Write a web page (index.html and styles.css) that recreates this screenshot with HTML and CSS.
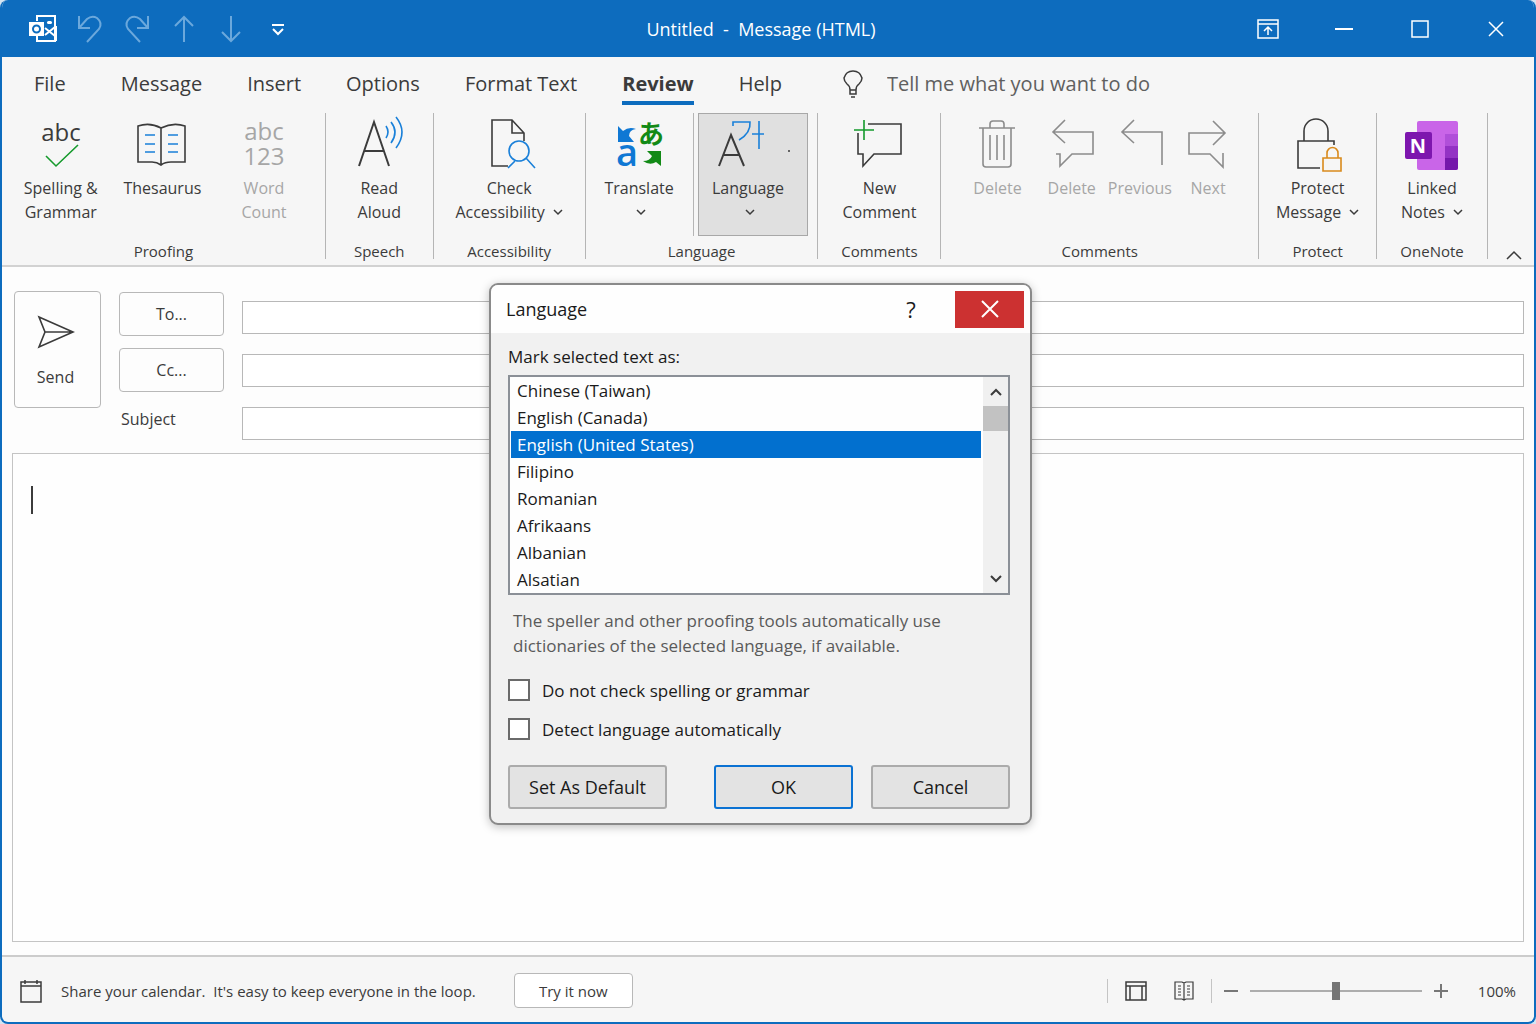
FILE: index.html
```html
<!doctype html>
<html lang="en">
<head>
    <meta charset="UTF-8">
    <meta name="viewport" content="width=device-width, initial-scale=1.0">
    <title>Untitled - Message (HTML)</title>
    <link rel="stylesheet" href="styles.css">
</head>
<body>
<div class="window">

    <!-- Title bar -->
    <header class="titlebar">
        <div class="quick-access">
            <button class="quick-btn" aria-label="Outlook">
                <svg width="28" height="28" viewBox="0 0 28 28">
                    <path d="M8 6V1H26V26H8V21" fill="none" stroke="#fff" stroke-width="2"/>
                    <path d="M16 13L26 21M26 12L16 20M27 11V26" fill="none" stroke="#fff" stroke-width="2"/>
                    <rect x="18" y="6" width="5" height="3" rx="1.5" fill="#fff" stroke="none"/>
                    <rect x="0" y="7" width="15" height="14" fill="#fff" stroke="none"/>
                    <circle cx="7.5" cy="14" r="3.5" fill="none" stroke="#0d6cbe" stroke-width="2"/>
                </svg>
            </button>
            <button class="quick-btn faded" aria-label="Undo">
                <svg width="26" height="28" viewBox="0 0 26 28">
                    <path d="M2 1V13H13M2 13L10 4Q15 0 20 3Q26 8 22 14L10 27"/>
                </svg>
            </button>
            <button class="quick-btn faded" aria-label="Redo">
                <svg width="26" height="28" viewBox="0 0 26 28">
                    <path d="M24 1V13H13M24 13L16 4Q11 0 6 3Q0 8 4 14L16 27"/>
                </svg>
            </button>
            <button class="quick-btn faded" aria-label="Previous item">
                <svg width="20" height="28" viewBox="0 0 20 28">
                    <path d="M10 27V2M1 11L10 2L19 11"/>
                </svg>
            </button>
            <button class="quick-btn faded" aria-label="Next item">
                <svg width="20" height="28" viewBox="0 0 20 28">
                    <path d="M10 1V26M1 17L10 26L19 17"/>
                </svg>
            </button>
            <button class="quick-btn" aria-label="Customize toolbar">
                <svg width="14" height="12" viewBox="0 0 14 12">
                    <path d="M1 2H13M2 6L7 11L12 6" stroke-width="2"/>
                </svg>
            </button>
        </div>
        <h1 class="title">Untitled &nbsp;-&nbsp; Message (HTML)</h1>
        <div class="window-controls">
            <button class="control-btn" aria-label="Ribbon display options">
                <svg width="22" height="20" viewBox="0 0 22 20">
                    <path d="M1 1H21V19H1ZM1 5H21M11 16V8M7 12L11 8L15 12" stroke-width="1.5"/>
                </svg>
            </button>
            <button class="control-btn" aria-label="Minimize">
                <svg width="18" height="18" viewBox="0 0 18 18"><path d="M0 9H18" stroke-width="2"/></svg>
            </button>
            <button class="control-btn" aria-label="Maximize">
                <svg width="18" height="18" viewBox="0 0 18 18"><path d="M1 1H17V17H1Z" stroke-width="1.5"/></svg>
            </button>
            <button class="control-btn" aria-label="Close">
                <svg width="16" height="16" viewBox="0 0 16 16"><path d="M1 1L15 15M15 1L1 15" stroke-width="1.5"/></svg>
            </button>
        </div>
    </header>

    <!-- Tabs -->
    <nav class="tabs">
        <a href="#" class="tab file">File</a>
        <a href="#" class="tab">Message</a>
        <a href="#" class="tab">Insert</a>
        <a href="#" class="tab">Options</a>
        <a href="#" class="tab">Format Text</a>
        <a href="#" class="tab active">Review</a>
        <a href="#" class="tab">Help</a>
        <label class="tell-me">
            <svg width="20" height="28" viewBox="0 0 20 28">
                <path stroke-width="1.5" d="M7 20Q7 16 4 14Q1 11 1 8Q3 1 10 1Q17 1 19 8Q19 11 16 14Q13 16 13 20ZM7 20V24H13V20M8 27H12"/>
            </svg>
            <input type="text" class="tell-input" placeholder="Tell me what you want to do">
        </label>
    </nav>

    <!-- Ribbon -->
    <div class="ribbon">
        <section class="group">
            <div class="tools proofing">
                <button class="tool">
                    <svg class="icon" viewBox="0 0 50 50">
                        <text class="icon-text" x="25" y="23">abc</text>
                        <path class="green" d="M10 38L20 48L42 27"/>
                    </svg>
                    <span>Spelling &amp;<br>Grammar</span>
                </button>
                <button class="tool">
                    <svg class="icon" viewBox="0 0 50 50">
                        <path d="M1 8Q13 4 24 10Q36 4 48 8V44H34Q28 44 24 47Q20 44 15 44H1ZM24 10V47"/>
                        <path class="blue" d="M8 17H18M8 26H18M8 34H18M31 17H41M31 26H41M31 34H41"/>
                    </svg>
                    <span>Thesaurus</span>
                </button>
                <button class="tool" disabled>
                    <span class="word-icon">abc<br>123</span>
                    <span>Word<br>Count</span>
                </button>
            </div>
            <h2 class="group-name">Proofing</h2>
        </section>

        <section class="group">
            <div class="tools">
                <button class="tool">
                    <svg class="icon" viewBox="0 0 50 50">
                        <path stroke-width="2" d="M5 48L20 4L35 48M10 33H30"/>
                        <path class="blue" d="M32 8Q36 14 32 20M37 4Q45 14 37 25M42 -1Q54 14 42 30"/>
                    </svg>
                    <span>Read<br>Aloud</span>
                </button>
            </div>
            <h2 class="group-name">Speech</h2>
        </section>

        <section class="group">
            <div class="tools">
                <button class="tool">
                    <svg class="icon" viewBox="0 0 50 50">
                        <path d="M24 48H8V2H28L40 15V23M28 2V15H40"/>
                        <circle class="blue" cx="35" cy="33" r="10"/>
                        <path class="blue" d="M42 40L51 50M31 43L24 50"/>
                    </svg>
                    <span>Check<br>Accessibility <svg class="chevron" viewBox="0 0 10 7"><path d="M1 1L5 5L9 1"/></svg></span>
                </button>
            </div>
            <h2 class="group-name">Accessibility</h2>
        </section>

        <section class="group">
            <div class="tools language">
                <button class="tool">
                    <svg class="icon" viewBox="0 0 50 50">
                        <path class="fill-blue" d="M4 8L9 13Q15 8 22 11Q15 12 15 18L20 24H4Z"/>
                        <path class="fill-green" d="M33 33H47V48L42 44Q36 48 29 43Q36 43 38 38Z"/>
                        <text class="latin-a" x="2" y="48">a</text>
                        <text class="kana" x="24" y="26">あ</text>
                    </svg>
                    <span>Translate<br><svg class="chevron" viewBox="0 0 10 7"><path d="M1 1L5 5L9 1"/></svg></span>
                </button>
                <button class="tool pressed">
                    <svg class="icon" viewBox="0 0 50 50">
                        <path stroke-width="2" d="M-4 48L8 17L21 48M0 37H16"/>
                        <path class="blue" d="M10 8V4H27Q28 15 16 22M36 3V31M29 16H41"/>
                        <circle class="dot" cx="66" cy="33" r="1"/>
                    </svg>
                    <span>Language<br><svg class="chevron" viewBox="0 0 10 7"><path d="M1 1L5 5L9 1"/></svg></span>
                </button>
            </div>
            <h2 class="group-name">Language</h2>
        </section>

        <section class="group">
            <div class="tools">
                <button class="tool">
                    <svg class="icon" viewBox="0 0 50 50">
                        <path d="M14 6H47V36H20L9 48V36H4V15"/>
                        <path class="green" d="M10 2V22M0 12H20"/>
                    </svg>
                    <span>New<br>Comment</span>
                </button>
            </div>
            <h2 class="group-name">Comments</h2>
        </section>

        <section class="group">
            <div class="tools comments">
                <button class="tool" disabled>
                    <svg class="icon" viewBox="0 0 50 50">
                        <path d="M7 10H43M18 10V6Q18 3 21 3H29Q32 3 32 6V10M11 10V46Q11 49 14 49H36Q39 49 39 46V10M18 17V42M25 17V42M32 17V42"/>
                    </svg>
                    <span>Delete</span>
                </button>
                <button class="tool" disabled>
                    <svg class="icon" viewBox="0 0 50 50">
                        <path d="M18 2L6 14L18 25M6 14H46V36H25L13 48V36H9"/>
                    </svg>
                    <span>Delete</span>
                </button>
                <button class="tool" disabled>
                    <svg class="icon" viewBox="0 0 50 50">
                        <path d="M19 2L7 14L19 25M7 14H47V47"/>
                    </svg>
                    <span>Previous</span>
                </button>
                <button class="tool" disabled>
                    <svg class="icon" viewBox="0 0 50 50">
                        <path d="M30 3L42 15L30 27M42 15H6V36H27L40 49V35"/>
                    </svg>
                    <span>Next</span>
                </button>
            </div>
            <h2 class="group-name">Comments</h2>
        </section>

        <section class="group">
            <div class="tools">
                <button class="tool">
                    <svg class="icon" viewBox="0 0 50 50">
                        <path d="M41 27V23H5V50H27M11 23V13A12 12 0 0 1 35 13V23"/>
                        <path class="orange" d="M30 40H48V53H30ZM34 40V35A5 5 0 0 1 45 35V40"/>
                    </svg>
                    <span>Protect<br>Message <svg class="chevron" viewBox="0 0 10 7"><path d="M1 1L5 5L9 1"/></svg></span>
                </button>
            </div>
            <h2 class="group-name">Protect</h2>
        </section>

        <section class="group">
            <div class="tools">
                <button class="tool">
                    <svg class="icon onenote" viewBox="0 0 50 50">
                        <rect x="10" y="3" width="41" height="49" rx="2" fill="#c965e8"/>
                        <rect x="38" y="16" width="13" height="12" fill="#b04fd9"/>
                        <rect x="38" y="28" width="13" height="12" fill="#9332c4"/>
                        <path d="M38 40H51V50Q51 52 49 52H38Z" fill="#7517ab"/>
                        <rect x="-2" y="14" width="27" height="27" rx="2" fill="#7d16ae"/>
                        <text class="onenote-n" x="11" y="35">N</text>
                    </svg>
                    <span>Linked<br>Notes <svg class="chevron" viewBox="0 0 10 7"><path d="M1 1L5 5L9 1"/></svg></span>
                </button>
            </div>
            <h2 class="group-name">OneNote</h2>
        </section>

        <button class="collapse" aria-label="Collapse the ribbon">
            <svg width="16" height="10" viewBox="0 0 16 10"><path d="M1 9L8 2L15 9"/></svg>
        </button>
    </div>

    <!-- Message -->
    <main class="message">
        <div class="fields">
            <button class="send">
                <svg width="36" height="32" viewBox="0 0 36 32">
                    <path d="M1 1L35 16L1 31L7 16ZM7 16H35"/>
                </svg>
                <span>Send</span>
            </button>
            <div class="recipients">
                <button class="field-btn">To...</button>
                <button class="field-btn">Cc...</button>
                <label class="subject-label" for="subject">Subject</label>
            </div>
            <div class="inputs">
                <input type="text" class="field" aria-label="To">
                <input type="text" class="field" aria-label="Cc">
                <input type="text" class="field" id="subject">
            </div>
        </div>
        <div class="editor">
            <textarea class="editor-text" aria-label="Message body"></textarea>
            <span class="caret"></span>
        </div>
    </main>

    <!-- Status bar -->
    <footer class="statusbar">
        <svg class="calendar" width="22" height="24" viewBox="0 0 22 24">
            <path d="M1 3H21V23H1ZM1 7H21M5 1V5M17 1V5"/>
        </svg>
        <span class="share">Share your calendar.&nbsp; It's easy to keep everyone in the loop.</span>
        <button class="try">Try it now</button>
        <div class="views">
            <button class="view-btn" aria-label="Normal view">
                <svg width="22" height="20" viewBox="0 0 22 20">
                    <path d="M1 1H21V19H1ZM1 5H21M5 5V19M17 5V19"/>
                </svg>
            </button>
            <button class="view-btn" aria-label="Reading view">
                <svg width="20" height="20" viewBox="0 0 20 20">
                    <path d="M1 1H8L10 2L12 1H19V18H12L10 19L8 18H1ZM10 2V19M4 5H7M4 8H7M4 11H7M4 14H7M13 5H16M13 8H16M13 11H16M13 14H16"/>
                </svg>
            </button>
        </div>
        <div class="zoom">
            <button class="zoom-btn" aria-label="Zoom out">
                <svg width="14" height="14" viewBox="0 0 14 14"><path d="M0 7H14" stroke-width="2"/></svg>
            </button>
            <input type="range" class="slider" min="0" max="200" value="100" aria-label="Zoom">
            <button class="zoom-btn" aria-label="Zoom in">
                <svg width="14" height="14" viewBox="0 0 14 14"><path d="M0 7H14M7 0V14" stroke-width="2"/></svg>
            </button>
            <span class="zoom-value">100%</span>
        </div>
    </footer>

    <!-- Language dialog -->
    <div class="dialog" role="dialog" aria-labelledby="dialogTitle">
        <div class="dialog-head">
            <h2 class="dialog-title" id="dialogTitle">Language</h2>
            <button class="help">?</button>
            <button class="close" aria-label="Close dialog">
                <svg width="18" height="18" viewBox="0 0 18 18"><path d="M1 1L17 17M17 1L1 17" stroke-width="2"/></svg>
            </button>
        </div>
        <form class="dialog-body">
            <label class="list-label" for="languages">Mark selected text as:</label>
            <div class="list">
                <select class="languages" id="languages" size="8">
                    <option>Chinese (Taiwan)</option>
                    <option>English (Canada)</option>
                    <option selected>English (United States)</option>
                    <option>Filipino</option>
                    <option>Romanian</option>
                    <option>Afrikaans</option>
                    <option>Albanian</option>
                    <option>Alsatian</option>
                </select>
                <div class="scrollbar">
                    <button type="button" class="scroll-btn" aria-label="Scroll up">
                        <svg width="12" height="8" viewBox="0 0 12 8"><path d="M1 7L6 2L11 7" stroke-width="2"/></svg>
                    </button>
                    <div class="scroll-thumb"></div>
                    <button type="button" class="scroll-btn down" aria-label="Scroll down">
                        <svg width="12" height="8" viewBox="0 0 12 8"><path d="M1 1L6 6L11 1" stroke-width="2"/></svg>
                    </button>
                </div>
            </div>
            <p class="hint">The speller and other proofing tools automatically use dictionaries of the selected language, if available.</p>
            <label class="check"><input type="checkbox" class="checkbox"> Do not check spelling or grammar</label>
            <label class="check"><input type="checkbox" class="checkbox"> Detect language automatically</label>
            <div class="dialog-buttons">
                <button type="button" class="dialog-btn default-btn">Set As Default</button>
                <button type="button" class="dialog-btn ok">OK</button>
                <button type="button" class="dialog-btn">Cancel</button>
            </div>
        </form>
    </div>
</div>
</body>
</html>
```
FILE: styles.css
```css
* {
    box-sizing: border-box;
}

body {
    margin: 0;
    background: #d5e5f2;
    color: #3b3b3b;
    font-family: "Open Sans", "Noto Sans", sans-serif;
    font-size: 16px;
}

button,
input,
select,
textarea {
    font: inherit;
    color: inherit;
}

button {
    padding: 0;
    border: none;
    background: none;
}

h1,
h2,
p {
    margin: 0;
    font-weight: normal;
}

svg {
    display: block;
    overflow: visible;
    fill: none;
    stroke: #3b3b3b;
}

.window {
    position: relative; /* Anchor for the dialog */
    display: flex;
    flex-direction: column;
    min-height: 100vh;
    border: 2px solid #0d6cbe;
    border-top: none;
    border-radius: 8px;
    background: #f6f6f6;
    overflow: hidden;
}

/* Title bar */
.titlebar {
    display: grid;
    grid-template-columns: 1fr auto 1fr;
    align-items: center;
    height: 57px;
    background: #0d6cbe;
    color: #fff;
}

.titlebar svg {
    stroke: #fff;
}

.quick-access {
    display: flex;
    padding-left: 17px;
}

.quick-btn {
    display: flex;
    justify-content: center;
    align-items: center;
    width: 47px;
    height: 56px;
}

.quick-btn.faded svg {
    stroke: #6ba8dc;
    stroke-width: 2;
}

.title {
    padding-right: 14px;
    font-size: 18px;
}

.window-controls {
    display: flex;
    justify-content: flex-end;
}

.control-btn {
    display: flex;
    justify-content: center;
    align-items: center;
    width: 76px;
    height: 56px;
}

/* Tabs */
.tabs {
    display: flex;
    gap: 45px;
    height: 56px;
    padding: 9px 32px 0;
    font-size: 20px;
    line-height: 36px;
}

.tab {
    height: 39px;
    color: inherit;
    text-decoration: none;
}

.tab.file {
    padding-right: 10px;
}

.tab.active {
    border-bottom: 4px solid #0d6cbe;
    font-weight: bold;
}

.tell-me {
    display: flex;
    flex: 1;
    gap: 24px;
    align-items: center;
    height: 36px;
    padding-left: 16px;
}

.tell-input {
    flex: 1;
    padding: 0;
    border: none;
    background: none;
}

.tell-input::placeholder {
    color: #606060;
}

/* Ribbon */
.ribbon {
    display: grid;
    grid-template-columns: 324fr 108fr 152fr 233fr 123fr 318fr 118fr 111fr 46fr;
    height: 154px;
    border-bottom: 2px solid #d2d2d2;
}

.group {
    display: flex;
    flex-direction: column;
    justify-content: space-between;
    height: 146px;
    border-right: 1px solid #b5b5b5;
}

.tools {
    display: grid;
    height: 123px;
}

.tools.proofing {
    grid-template-columns: repeat(3, 1fr);
    padding: 0 10px 0 8px;
}

.tools.language {
    grid-template-columns: 108fr 111fr;
    column-gap: 4px;
    padding-right: 9px;
}

.tools.comments {
    grid-template-columns: 80fr 68fr 68fr 68fr;
    padding: 0 16px;
}

.tool {
    display: flex;
    flex-direction: column;
    align-items: center;
    gap: 8px;
    padding-top: 5px;
    line-height: 24px;
    white-space: nowrap;
}

.language .tool:first-child {
    border-right: 1px solid #b5b5b5;
}

.tool.pressed {
    padding-top: 4px;
    padding-right: 10px;
    border: 1px solid #a8a8a8;
    background: #e0e0e0;
}

.tool:disabled {
    color: #a6a6a6;
}

.icon {
    width: 50px;
    height: 50px;
    stroke-width: 1.6;
}

.tool:disabled .icon {
    stroke: #8c8c8c;
}

.icon .blue {
    stroke: #1a80d9;
}

.icon .green {
    stroke: #159a2c;
}

.icon .orange {
    stroke: #d98a1c;
}

.icon .fill-blue {
    fill: #0f78d4;
    stroke: none;
}

.icon .fill-green {
    fill: #128a16;
    stroke: none;
}

.icon .dot {
    fill: #3b3b3b;
    stroke: none;
}

.icon text {
    stroke: none;
}

.icon-text {
    fill: currentColor;
    font-size: 24px;
    text-anchor: middle;
}

.word-icon {
    height: 50px;
    font-size: 24px;
    line-height: 25px;
}

.latin-a {
    fill: #0f78d4;
    font-size: 38px;
    font-weight: 600;
}

.kana {
    fill: #128a16;
    font-family: "Noto Sans CJK JP", sans-serif;
    font-size: 26px;
    font-weight: bold;
}

.onenote rect,
.onenote path {
    stroke: none;
}

.onenote-n {
    fill: #fff;
    font-size: 20px;
    font-weight: bold;
    text-anchor: middle;
}

.chevron {
    display: inline-block;
    width: 10px;
    height: 7px;
    margin-left: 4px;
    vertical-align: 2px;
    stroke-width: 1.5;
}

.group-name {
    font-size: 15px;
    line-height: 16px;
    text-align: center;
}

.collapse {
    display: flex;
    justify-content: center;
    align-items: flex-end;
    padding: 0 0 5px 5px;
}

.collapse svg {
    stroke-width: 1.5;
}

/* Message */
.message {
    display: flex;
    flex: 1;
    flex-direction: column;
    padding: 24px 10px 13px;
    background: #fdfdfd;
}

.fields {
    display: flex;
    gap: 18px;
    padding-left: 2px;
}

.send {
    display: flex;
    flex-direction: column;
    justify-content: center;
    align-items: center;
    gap: 18px;
    width: 87px;
    height: 117px;
    padding: 4px 4px 0 0;
    border: 1px solid #b8b8b8;
    border-radius: 4px;
}

.send svg {
    stroke-width: 1.6;
}

.recipients {
    display: flex;
    flex-direction: column;
    gap: 12px;
    width: 105px;
    padding-top: 1px;
}

.field-btn {
    height: 44px;
    border: 1px solid #b8b8b8;
    border-radius: 4px;
}

.subject-label {
    padding: 4px 2px;
}

.inputs {
    display: flex;
    flex: 1;
    flex-direction: column;
    gap: 20px;
    padding-top: 10px;
}

.field {
    height: 33px;
    border: 1px solid #b8b8b8;
    background: #fff;
}

.editor {
    position: relative;
    display: flex;
    flex: 1;
    margin-top: 13px;
}

.editor-text {
    flex: 1;
    padding: 30px 20px;
    border: 1px solid #c4c4c4;
    background: #fefefe;
    resize: none;
}

.caret {
    position: absolute;
    top: 33px;
    left: 19px;
    width: 2px;
    height: 28px;
    background: #3b3b3b;
}

/* Status bar */
.statusbar {
    display: flex;
    align-items: center;
    height: 67px;
    padding: 2px 18px 0;
    border-top: 2px solid #cccccc;
    font-size: 15px;
}

.calendar {
    margin-right: 19px;
    stroke-width: 1.5;
}

.try {
    width: 119px;
    height: 35px;
    margin-left: 38px;
    border: 1px solid #b8b8b8;
    border-radius: 4px;
    background: #fff;
}

.views {
    display: flex;
    gap: 27px;
    margin-left: auto;
    padding: 2px 17px;
    border: solid #c4c4c4;
    border-width: 0 1px;
}

.view-btn svg {
    stroke-width: 1.5;
}

.view-btn:last-child svg {
    stroke-width: 1.2;
}

.zoom {
    display: flex;
    align-items: center;
    gap: 12px;
    padding-left: 12px;
}

.zoom svg {
    stroke: #777;
}

.slider {
    width: 172px;
    height: 18px;
    margin: 0;
    appearance: none;
    background: linear-gradient(#adadad, #adadad) center / 100% 2px no-repeat;
}

.slider::-webkit-slider-thumb {
    width: 8px;
    height: 18px;
    appearance: none;
    background: #757575;
}

.zoom-value {
    padding-left: 18px;
}

/* Language dialog */
.dialog {
    position: absolute; /* Over the message */
    top: 283px;
    left: 487px;
    width: 543px;
    border: 2px solid #8a8a8a;
    border-radius: 9px;
    background: #f1f1f1;
    box-shadow: 0 2px 10px rgba(0, 0, 0, 0.25);
    color: #1a1a1a;
    font-size: 17px;
    overflow: hidden;
}

.dialog-head {
    display: flex;
    align-items: center;
    height: 48px;
    padding: 0 6px 0 15px;
    background: #fefefe;
}

.dialog-title {
    flex: 1;
    font-size: 18px;
}

.help {
    width: 36px;
    margin-right: 26px;
    font-size: 22px;
}

.close {
    display: flex;
    justify-content: center;
    align-items: center;
    width: 69px;
    height: 37px;
    background: #cc3131;
}

.close svg {
    stroke: #fff;
}

.dialog-body {
    padding: 12px 20px 14px 17px;
}

.list-label {
    display: block;
    line-height: 24px;
}

.list {
    display: flex;
    margin-top: 6px;
    border: 2px solid #8b9097;
    background: #fefefe;
}

.languages {
    flex: 1;
    padding: 0 2px 0 1px;
    border: none;
    outline: none;
    background: none;
    overflow: hidden;
    scrollbar-width: none;
}

.languages option {
    height: 27px;
    padding: 2px 6px;
    line-height: 23px;
}

.languages option:checked {
    background: linear-gradient(#0270cf, #0270cf);
    color: #fff;
}

.scrollbar {
    display: flex;
    flex-direction: column;
    width: 25px;
    background: #f0f0f0;
}

.scroll-btn {
    display: flex;
    justify-content: center;
    align-items: center;
    height: 29px;
}

.scroll-btn.down {
    margin-top: auto;
}

.scroll-thumb {
    height: 25px;
    background: #c2c2c2;
}

.hint {
    margin: 13px 0 0 5px;
    color: #5a5a5a;
    line-height: 25px;
}

.check {
    display: flex;
    align-items: center;
    gap: 12px;
    height: 22px;
    margin-top: 17px;
}

.hint + .check {
    margin-top: 21px;
}

.checkbox {
    width: 22px;
    height: 22px;
    margin: 0;
    appearance: none;
    border: 2px solid #6a6a6a;
    background: #fff;
}

.dialog-buttons {
    display: flex;
    gap: 18px;
    margin-top: 25px;
}

.dialog-btn {
    width: 139px;
    height: 44px;
    border: 2px solid #ababab;
    border-radius: 3px;
    background: #e3e3e3;
    font-size: 18px;
}

.dialog-btn.default-btn {
    width: 159px;
    margin-right: auto;
}

.dialog-btn.ok {
    border-color: #0b72d3;
}
```
